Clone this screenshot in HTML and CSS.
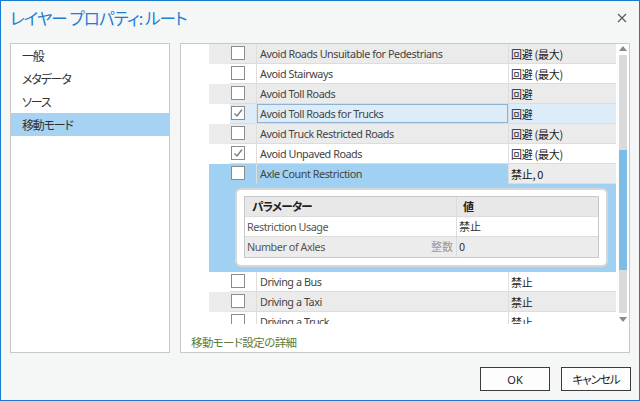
FILE: index.html
```html
<!DOCTYPE html>
<html lang="ja">
<head>
<meta charset="utf-8">
<title>レイヤー プロパティ: ルート</title>
<link rel="stylesheet" href="styles.css">
</head>
<body>
<div class="window">
  <header class="titlebar">
    <h1 class="title">レイヤー プロパティ: ルート</h1>
    <span class="close"><svg width="10" height="10" viewBox="0 0 10 10"><path d="M1 1L9 9M9 1L1 9" stroke="#5a5a5a" stroke-width="1.2" fill="none"/></svg></span>
  </header>
  <div class="main">
    <nav class="nav">
      <div class="nav-item">一般</div>
      <div class="nav-item">メタデータ</div>
      <div class="nav-item">ソース</div>
      <div class="nav-item active">移動モード</div>
    </nav>
    <section class="panel">
      <div class="listwrap">
        <div class="list">
          <div class="row alt"><span class="c0"></span><span class="c1"><i class="cb"></i></span><span class="c2">Avoid Roads Unsuitable for Pedestrians</span><span class="c3">回避 (最大)</span></div>
          <div class="row"><span class="c0"></span><span class="c1"><i class="cb"></i></span><span class="c2">Avoid Stairways</span><span class="c3">回避 (最大)</span></div>
          <div class="row alt"><span class="c0"></span><span class="c1"><i class="cb"></i></span><span class="c2">Avoid Toll Roads</span><span class="c3">回避</span></div>
          <div class="row current"><span class="c0"></span><span class="c1"><i class="cb"><svg width="12" height="12" viewBox="0 0 12 12"><path d="M2.5 6.5L5 9L10 2.5" stroke="#7a7a7a" stroke-width="1.3" fill="none"/></svg></i></span><span class="c2 focus">Avoid Toll Roads for Trucks</span><span class="c3">回避</span></div>
          <div class="row alt"><span class="c0"></span><span class="c1"><i class="cb"></i></span><span class="c2">Avoid Truck Restricted Roads</span><span class="c3">回避 (最大)</span></div>
          <div class="row"><span class="c0"></span><span class="c1"><i class="cb"><svg width="12" height="12" viewBox="0 0 12 12"><path d="M2.5 6.5L5 9L10 2.5" stroke="#7a7a7a" stroke-width="1.3" fill="none"/></svg></i></span><span class="c2">Avoid Unpaved Roads</span><span class="c3">回避 (最大)</span></div>
          <div class="row selected"><span class="c0"></span><span class="c1"><i class="cb"></i></span><span class="c2">Axle Count Restriction</span><span class="c3 strong">禁止, 0</span></div>
          <div class="detail">
            <div class="card">
              <div class="ptable">
                <div class="prow head"><span class="pc1">パラメーター</span><span class="pc2">値</span></div>
                <div class="prow"><span class="pc1">Restriction Usage</span><span class="pc2">禁止</span></div>
                <div class="prow alt"><span class="pc1">Number of Axles<em class="type">整数</em></span><span class="pc2">0</span></div>
              </div>
            </div>
          </div>
          <div class="row"><span class="c0"></span><span class="c1"><i class="cb"></i></span><span class="c2">Driving a Bus</span><span class="c3">禁止</span></div>
          <div class="row alt"><span class="c0"></span><span class="c1"><i class="cb"></i></span><span class="c2">Driving a Taxi</span><span class="c3">禁止</span></div>
          <div class="row"><span class="c0"></span><span class="c1"><i class="cb"></i></span><span class="c2">Driving a Truck</span><span class="c3">禁止</span></div>
        </div>
        <div class="scrollbar">
          <i class="arrow up"></i>
          <div class="track"><div class="thumb"></div></div>
          <i class="arrow down"></i>
        </div>
      </div>
      <a class="link">移動モード設定の詳細</a>
    </section>
  </div>
  <footer class="footer">
    <button class="btn">OK</button>
    <button class="btn jp">キャンセル</button>
  </footer>
</div>
</body>
</html>
```

FILE: styles.css
```css
html, body {
  margin: 0;
  padding: 0;
}
body {
  font-family: "Noto Sans", "Noto Sans CJK JP", sans-serif;
  font-feature-settings: "palt";
  color: #333;
}
.window {
  width: 640px;
  height: 401px;
  box-sizing: border-box;
  border: 1px solid #1a7bd0;
  background: #f5f6f6;
  display: flex;
  flex-direction: column;
  overflow: hidden;
}
.titlebar {
  height: 42px;
  flex: none;
  display: flex;
  align-items: flex-start;
  padding: 6px 12px 0 9px;
  box-sizing: border-box;
}
.title {
  margin: 0;
  font-family: "Noto Sans CJK JP", sans-serif;
  font-feature-settings: "palt";
  font-size: 16.5px;
  letter-spacing: -0.9px;
  line-height: 22px;
  font-weight: 400;
  color: #1e7ed2;
}
.close {
  margin-left: auto;
  margin-top: 6px;
  display: flex;
}
.main {
  display: flex;
  gap: 10px;
  padding: 0 9px;
  height: 310px;
  flex: none;
}
.nav {
  width: 160px;
  box-sizing: border-box;
  border: 1px solid #c9c9c9;
  background: #fff;
}
.nav-item {
  height: 23px;
  line-height: 23px;
  padding-left: 11px;
  font-family: "Noto Sans CJK JP", sans-serif;
  font-feature-settings: "palt";
  font-size: 12px;
  letter-spacing: -1.2px;
  color: #333;
}
.nav-item.active {
  background: #a6d3f3;
}
.panel {
  width: 450px;
  box-sizing: border-box;
  border: 1px solid #c9c9c9;
  background: #fff;
  display: flex;
  flex-direction: column;
}
.listwrap {
  height: 280px;
  display: flex;
  flex: none;
}
.list {
  width: 407px;
  margin-left: 28px;
  overflow: hidden;
}
.row {
  display: grid;
  grid-template-columns: 21px 27px 252px 107px;
  height: 20px;
  font-size: 10.8px;
  letter-spacing: -0.45px;
  line-height: 19px;
}
.row > span {
  box-sizing: border-box;
  border-bottom: 1px solid #dcdcdc;
  white-space: nowrap;
  overflow: hidden;
}
.row > .c0 {
  border-bottom: 0;
}
.row.alt > span {
  background: #ebebeb;
}
.c1 {
  border-right: 1px solid #dedede;
  padding: 2px 0 0 1px;
}
.c2 {
  border-right: 1px solid #dedede;
  padding-left: 3px;
  color: #444;
}
.c3 {
  padding: 1px 0 0 2px;
  font-family: "Noto Sans CJK JP", sans-serif;
  font-size: 11px;
  line-height: 19px;
  letter-spacing: -0.3px;
  color: #222;
}
.row.current > .c1,
.row.current > .c2,
.row.current > .c3 {
  background: #dcecf8;
}
.c2.focus {
  box-shadow: inset 0 0 0 1px #8fb2d3;
}
.row.selected > .c0,
.row.selected > .c1,
.row.selected > .c2 {
  background: #a0d1f2;
  border-bottom-color: #a0d1f2;
}
.row.selected > .c3 {
  background: #ececec;
  color: #111;
}
.cb {
  display: flex;
  align-items: center;
  justify-content: center;
  width: 14px;
  height: 14px;
  box-sizing: border-box;
  border: 1px solid #8c8c8c;
  background: #fff;
}
.detail {
  height: 88px;
  background: #a0d1f2;
  padding: 4px 8px 0 26px;
  box-sizing: border-box;
}
.card {
  height: 79px;
  box-sizing: border-box;
  border: 2px solid #d6d6d6;
  border-radius: 6px;
  background: #fff;
  padding: 6px 7px 0 7px;
}
.ptable {
  border: 1px solid #c8c8c8;
}
.prow {
  display: grid;
  grid-template-columns: 212px 1fr;
  height: 20px;
  font-size: 10.8px;
  letter-spacing: -0.45px;
  line-height: 19px;
  border-bottom: 1px solid #dcdcdc;
  box-sizing: border-box;
}
.prow:last-child {
  border-bottom: 0;
}
.prow.head {
  background: #e8e8e8;
  font-family: "Noto Sans CJK JP", sans-serif;
  font-weight: 700;
  font-size: 11.5px;
  letter-spacing: -0.8px;
}
.prow.alt {
  background: #ececec;
}
.pc1 {
  border-right: 1px solid #dcdcdc;
  padding-left: 2px;
  color: #555;
  display: flex;
}
.prow.head .pc1 {
  padding-left: 7px;
  color: #222;
}
.pc2 {
  padding-left: 2px;
  font-family: "Noto Sans CJK JP", sans-serif;
  font-size: 11px;
  letter-spacing: 0;
  color: #333;
}
.prow.head .pc2 {
  padding-left: 6px;
  color: #222;
}
.type {
  margin-left: auto;
  margin-right: 3px;
  font-style: normal;
  font-family: "Noto Sans CJK JP", sans-serif;
  font-size: 11px;
  letter-spacing: 0;
  color: #999;
}
.scrollbar {
  width: 13px;
  display: flex;
  flex-direction: column;
  align-items: center;
}
.arrow {
  width: 0;
  height: 0;
  border-left: 4.5px solid transparent;
  border-right: 4.5px solid transparent;
}
.arrow.up {
  margin-top: 2px;
  border-bottom: 5px solid #8a8a8a;
}
.arrow.down {
  margin-top: 4px;
  border-top: 5px solid #8a8a8a;
}
.track {
  width: 8px;
  height: 258px;
  margin-top: 4px;
  background: #dadada;
}
.thumb {
  margin-top: 95px;
  height: 120px;
  background: #7cbde8;
}
.link {
  display: block;
  margin-top: 10px;
  padding-left: 10px;
  font-family: "Noto Sans CJK JP", sans-serif;
  font-feature-settings: "palt";
  font-size: 11.5px;
  letter-spacing: -0.6px;
  line-height: 16px;
  color: #5d7b38;
}
.footer {
  display: flex;
  justify-content: flex-end;
  gap: 11px;
  padding: 14px 8px 0 0;
}
.btn {
  width: 70px;
  height: 24px;
  box-sizing: border-box;
  border: 1px solid #3c3c3c;
  background: #fdfdfd;
  font-family: "Noto Sans", "Noto Sans CJK JP", sans-serif;
  font-size: 11px;
  color: #222;
  padding: 0;
}
.btn.jp {
  font-family: "Noto Sans CJK JP", sans-serif;
  font-feature-settings: "palt";
  font-size: 11.5px;
  letter-spacing: -1px;
}
```
